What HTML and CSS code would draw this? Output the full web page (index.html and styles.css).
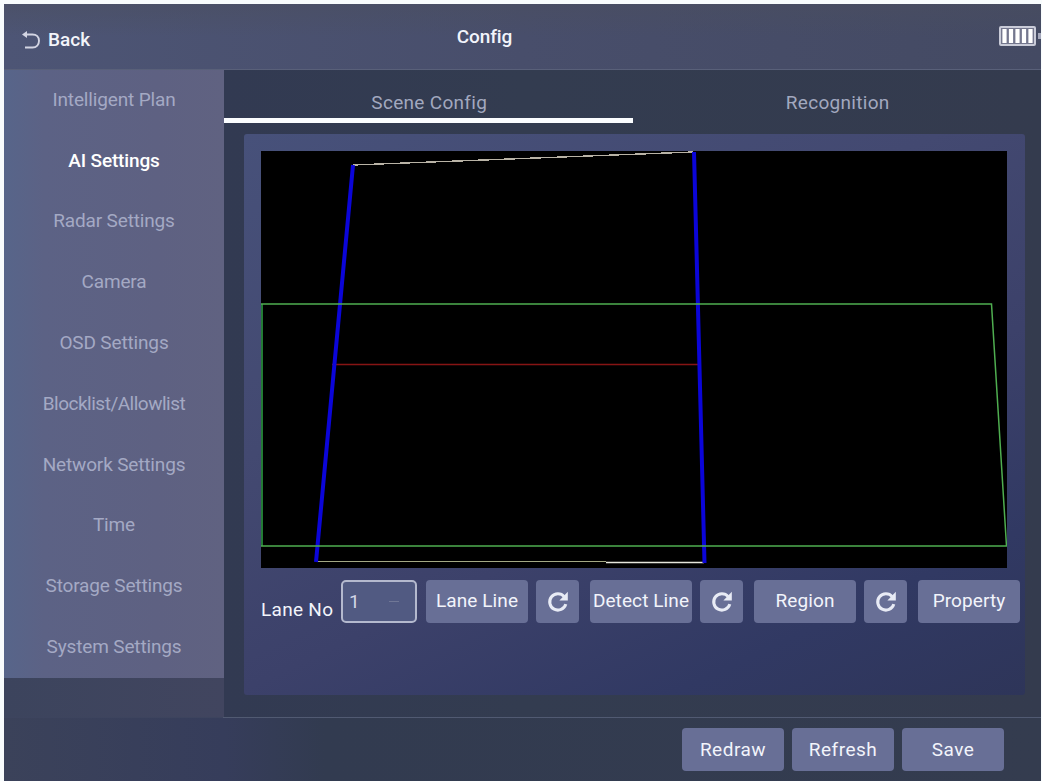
FILE: index.html
```html
<!DOCTYPE html>
<html lang="en">
<head>
    <meta charset="UTF-8">
    <meta name="viewport" content="width=device-width, initial-scale=1.0">
    <title>Config</title>
    <link rel="stylesheet" href="styles.css">
</head>
<body>
    <svg class="defs" width="0" height="0">
        <symbol id="reload" viewBox="0 0 22 22">
            <path d="M17.2 5.6A8.2 8.2 0 1 0 18.8 13.2" fill="none" stroke="currentColor" stroke-width="3"/>
            <path d="M20.8 .8V9.4H12.400Z" fill="currentColor"/>
        </symbol>
    </svg>
    <div class="app">
        <header class="header">
            <a class="back">
                <svg width="19" height="20" viewBox="0 0 19 20">
                    <path d="M3 3.5H10.5C14.5 3.5 17 6 17 9.8S14.5 16.5 10.5 16.5H3" fill="none" stroke="currentColor" stroke-width="1.9"/>
                    <path d="M0 3.5L5 0V7Z" fill="currentColor"/>
                </svg>
                <span>Back</span>
            </a>
            <h1 class="title">Config</h1>
            <svg class="battery" width="42" height="20" viewBox="0 0 42 20">
                <rect x="1" y="1" width="35" height="18" rx="1" fill="#74778e" stroke="#c9cbd8" stroke-width="2"/>
                <path d="M5.5 3V17M12 3V17M18.5 3V17M25 3V17M31.5 3V17" stroke="#fff" stroke-width="4.2"/>
                <rect x="39" y="7" width="3" height="6" fill="#a5a8bb"/>
            </svg>
        </header>
        <div class="body">
            <nav class="sidebar">
                <a class="item">Intelligent Plan</a>
                <a class="item active">AI Settings</a>
                <a class="item">Radar Settings</a>
                <a class="item">Camera</a>
                <a class="item">OSD Settings</a>
                <a class="item tight">Blocklist/Allowlist</a>
                <a class="item">Network Settings</a>
                <a class="item">Time</a>
                <a class="item">Storage Settings</a>
                <a class="item">System Settings</a>
            </nav>
            <main class="main">
                <div class="tabs">
                    <a class="tab selected">Scene Config</a>
                    <a class="tab">Recognition</a>
                </div>
                <section class="panel">
                    <svg class="scene" width="746" height="417" viewBox="0 0 746 417">
                        <!-- lane edges -->
                        <path d="M92 14L432 1" stroke="#b9b3a6" stroke-width="1.4" shape-rendering="crispEdges"/>
                        <path d="M55 410.5H345" stroke="#a3a884" stroke-width="1.2"/>
                        <path d="M345 411.5H443" stroke="#e6e6dc" stroke-width="1.4"/>
                        <!-- detect line -->
                        <path d="M71 213.500H437" stroke="#861414" stroke-width="1.4"/>
                        <path d="M92 14L55 411M433 1L443.5 412" stroke="#0b05d8" stroke-width="4"/>
                        <!-- region -->
                        <path d="M1 153V395" stroke="#237b35" stroke-width="2"/>
                        <path d="M0 153H730.500L745.5 395H0" fill="none" stroke="#4fae50" stroke-width="1.500"/>
                    </svg>
                    <div class="controls">
                        <label class="lane-label">Lane No</label>
                        <div class="select"><span>1</span><i class="dash"></i></div>
                        <button class="btn">Lane Line</button>
                        <button class="btn icon"><svg width="22" height="22"><use href="#reload"/></svg></button>
                        <button class="btn">Detect Line</button>
                        <button class="btn icon"><svg width="22" height="22"><use href="#reload"/></svg></button>
                        <button class="btn">Region</button>
                        <button class="btn icon"><svg width="22" height="22"><use href="#reload"/></svg></button>
                        <button class="btn">Property</button>
                    </div>
                </section>
            </main>
        </div>
        <footer class="footer">
            <button class="btn">Redraw</button>
            <button class="btn">Refresh</button>
            <button class="btn">Save</button>
        </footer>
    </div>
</body>
</html>
```
FILE: styles.css
```css
* {
    box-sizing: border-box;
}

body {
    margin: 0;
    padding: 4px 1px 0 4px;
    height: 781px;
    overflow: hidden;
    background: #f8fcfd;
    font-family: Roboto, "Liberation Sans", sans-serif;
    font-size: 19px;
    color: #f2f4fb;
}

.defs {
    display: block;
    height: 0;
}

.app {
    height: 777px;
    display: flex;
    flex-direction: column;
    background: linear-gradient(90deg, #323a54, #323b4e 45%, #333b4f);
}

.header {
    height: 66px;
    display: grid;
    grid-template-columns: 1fr auto 1fr;
    align-items: center;
    padding: 0 0 0 18px;
    border-bottom: 1px solid #596079;
    background: linear-gradient(180deg, rgba(74, 78, 94, .5), rgba(74, 78, 108, 0) 50%), linear-gradient(90deg, #4d5575, #484e6b 50%, #444a63);
}

.back {
    display: flex;
    align-items: center;
    gap: 7px;
    padding-top: 5px;
    font-weight: 500;
    color: #f3f4fa;
}

.back svg {
    margin-top: 3px;
    color: #d3d5e3;
}

.title {
    margin: 0;
    padding-right: 94px;
    font-size: 19px;
    font-weight: 500;
    letter-spacing: -.1px;
}

.battery {
    justify-self: end;
    margin-top: -2px;
}

.body {
    height: 647px;
    display: flex;
    background: linear-gradient(90deg, #3c445d, #41455f 220px, #323a52 220px, #333c50 50%, #343b4e);
}

.sidebar {
    width: 220px;
    height: 608px;
    display: flex;
    flex-direction: column;
    background: linear-gradient(90deg, #57658a, #5c6285 18%, #5e6182 70%, #606281);
}

.item {
    flex: 1;
    display: flex;
    align-items: center;
    justify-content: center;
    padding-bottom: 2px;
    letter-spacing: -.15px;
    color: #a4a9c4;
}

.item.tight {
    letter-spacing: -.5px;
}

.item.active {
    font-weight: 500;
    color: #fff;
}

.main {
    flex: 1;
    display: flex;
    flex-direction: column;
}

.tabs {
    height: 53px;
    display: flex;
}

.tab {
    flex: 1;
    display: flex;
    align-items: center;
    justify-content: center;
    padding: 16px 0 0 2px;
    border-bottom: 5px solid transparent;
    letter-spacing: .3px;
    color: #a2a8bf;
}

.tab.selected {
    border-bottom-color: #fbfdff;
}

.panel {
    width: 781px;
    height: 561px;
    margin: 11px 0 0 20px;
    padding: 17px 3px 0 17px;
    border-radius: 3px;
    background: linear-gradient(155deg, #47517a 0%, #434971 35%, #3c416a 60%, #313963 82%, #2e3559 100%);
}

.scene {
    display: block;
    background: #000;
}

.controls {
    display: flex;
    align-items: center;
    margin-top: 12px;
}

.lane-label {
    width: 80px;
    padding-top: 16px;
    letter-spacing: .3px;
}

.select {
    width: 76px;
    height: 43px;
    display: flex;
    align-items: center;
    justify-content: space-between;
    margin-right: 9px;
    padding: 0 16px 0 6px;
    border: 2px solid #b4b9ce;
    border-radius: 5px;
    background: #515a82;
    color: #d2d6e6;
}

.dash {
    width: 10px;
    height: 1px;
    background: #707796;
}

.btn {
    width: 102px;
    height: 43px;
    display: flex;
    align-items: center;
    justify-content: center;
    padding: 0 0 2px;
    border: none;
    border-radius: 4px;
    background: #686f96;
    font: inherit;
    white-space: nowrap;
    color: #f2f4fb;
}

.btn.icon {
    width: 43px;
    margin: 0 11px 0 8px;
    padding: 0;
    color: #e8ebf5;
}

.controls .btn:not(.icon) {
    letter-spacing: .1px;
}

.footer {
    height: 64px;
    display: flex;
    justify-content: flex-end;
    gap: 8px;
    padding: 10px 37px 0 0;
    background: linear-gradient(90deg, #3b425a, #363d5b 220px, #323b50 320px, #343c4f);
    border-top: 1px solid transparent;
    border-image: linear-gradient(90deg, #3d445e 220px, #515a72 220px) 1;
}

.footer .btn {
    padding-bottom: 0;
    letter-spacing: .5px;
}
```
